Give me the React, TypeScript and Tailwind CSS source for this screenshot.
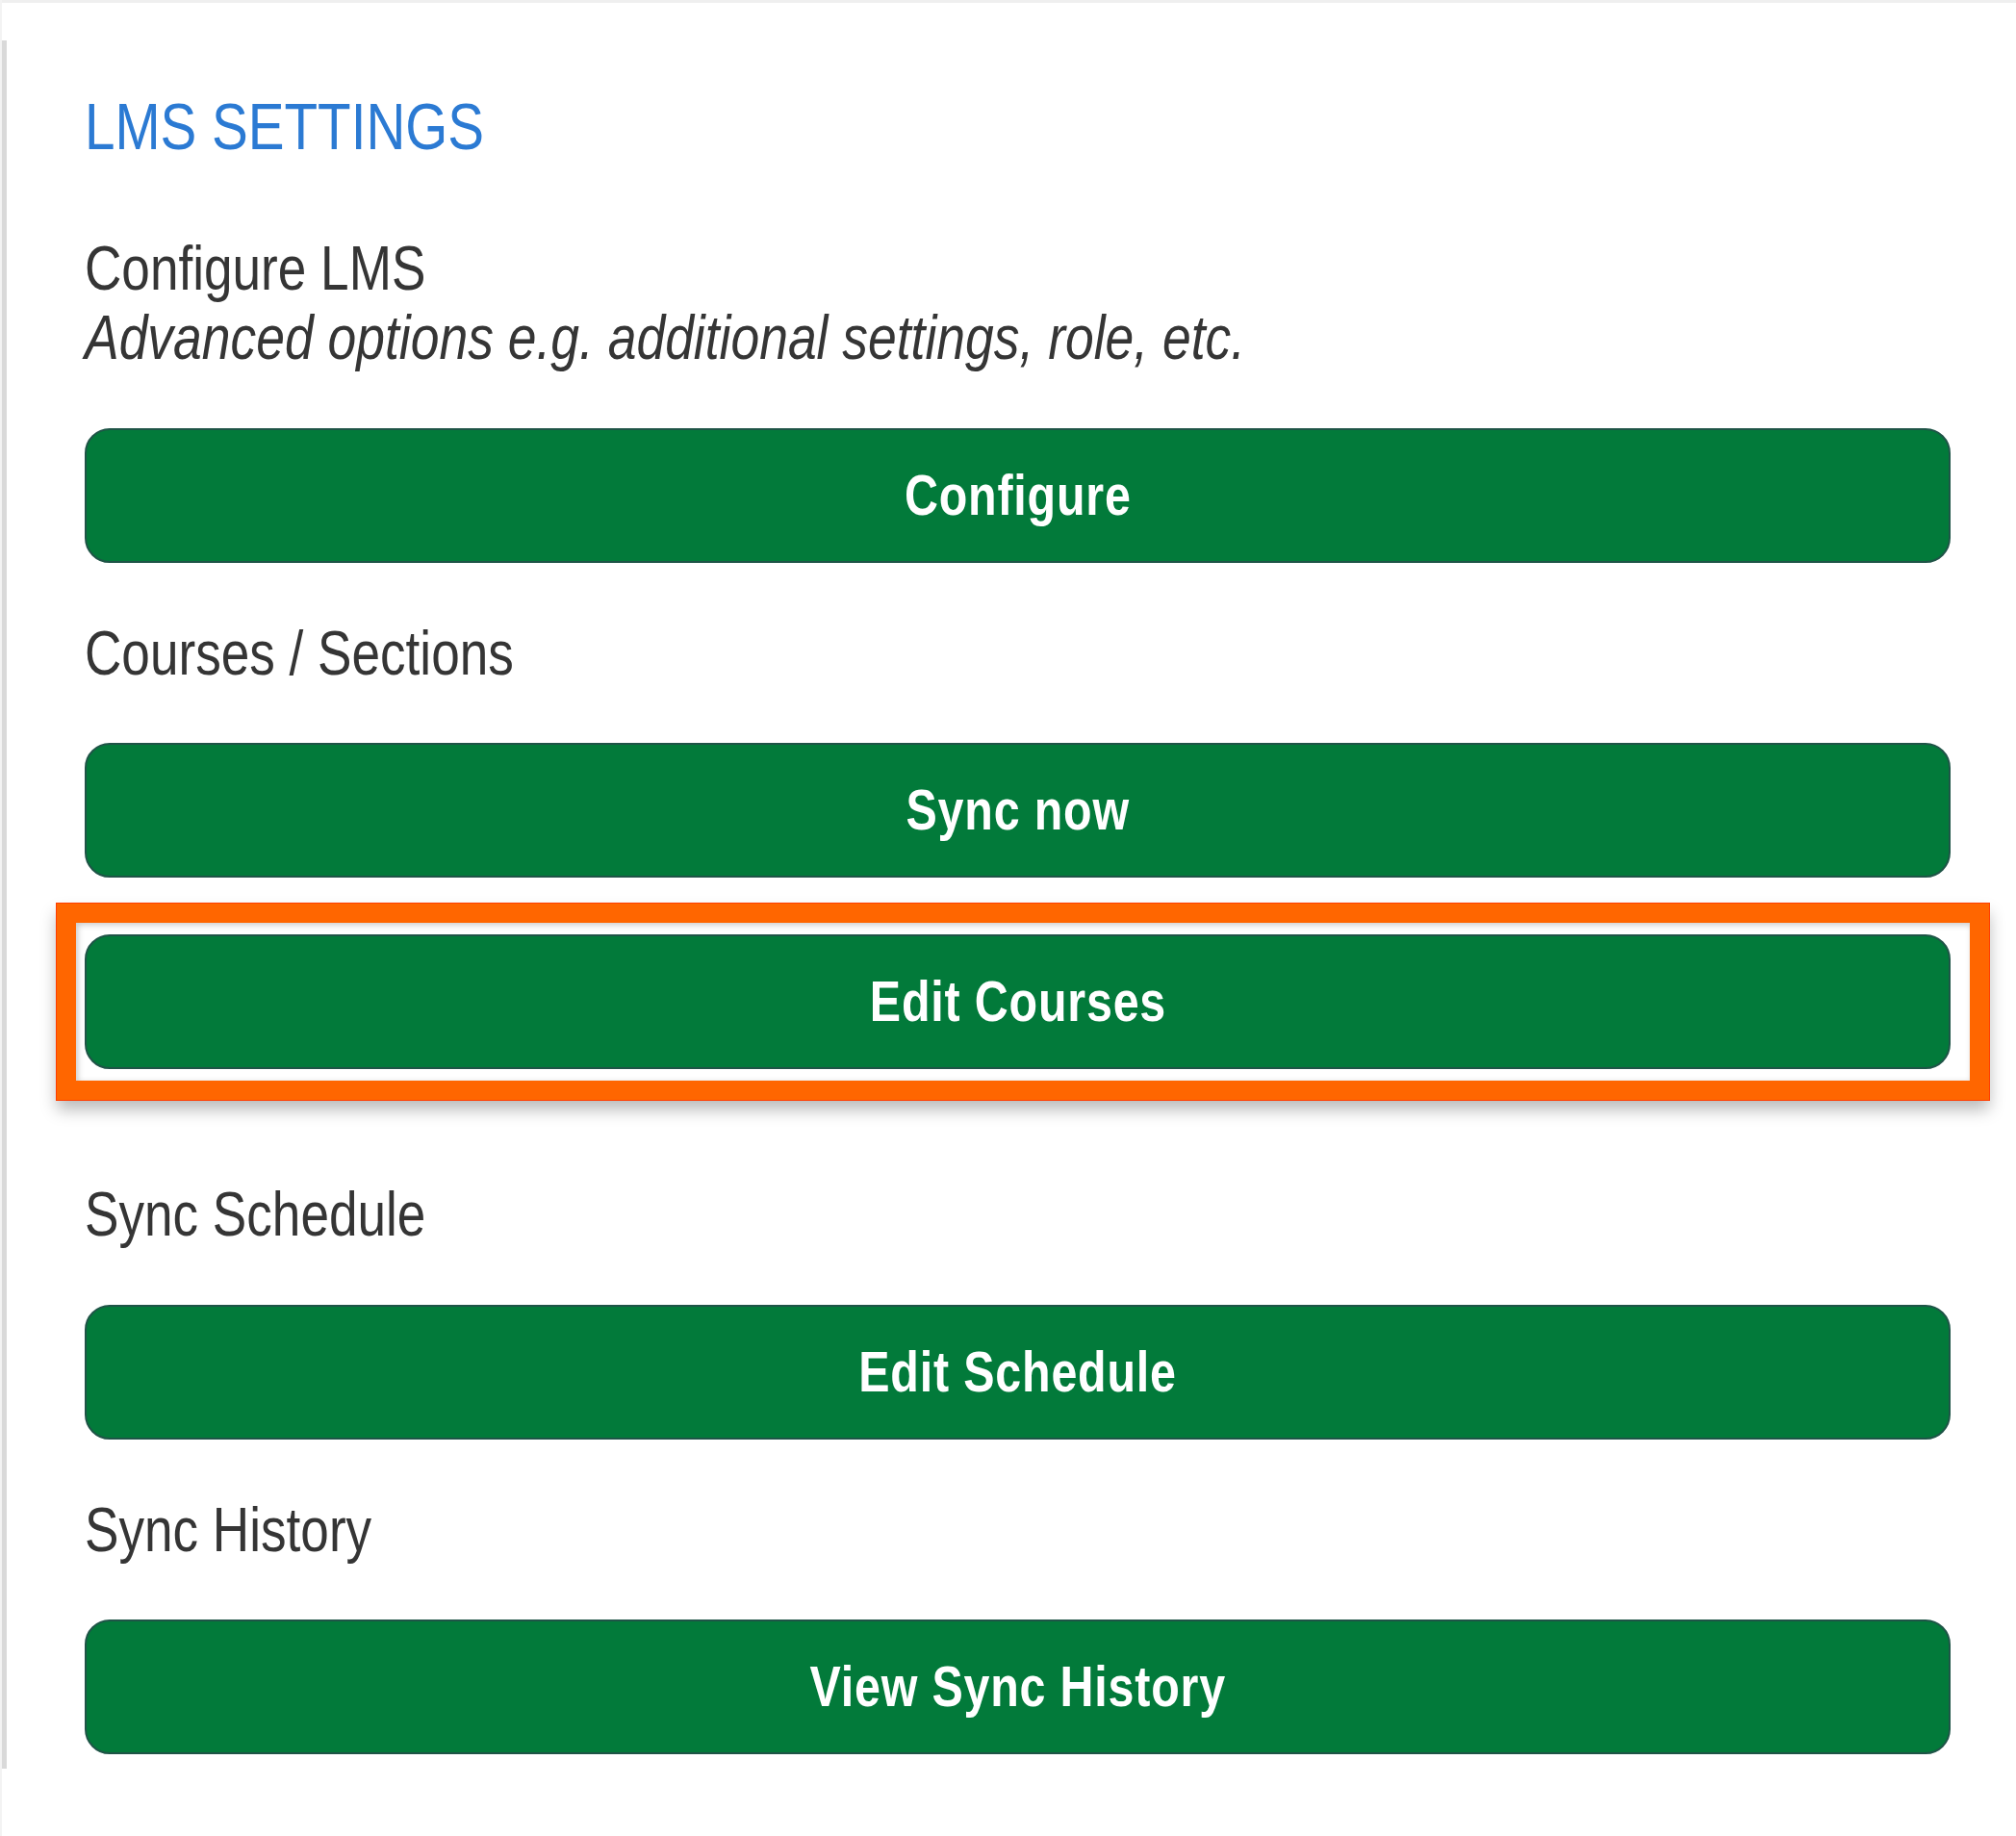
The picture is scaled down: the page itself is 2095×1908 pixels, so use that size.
import React from "react";

const FONT = { fontFamily: '"Liberation Sans", Arial, sans-serif' };

function GreenButton({ label }: { label: string }) {
  return (
    <button
      className="w-full h-[140px] rounded-[26px] bg-[#027a3a] border-2 border-[#1f5447] text-white font-bold text-[59px] leading-[70px] tracking-[1px] flex items-center justify-center"
      style={FONT}
    >
      <span className="inline-block scale-x-[0.82] origin-center whitespace-nowrap">{label}</span>
    </button>
  );
}

function Label({ children, italic }: { children: React.ReactNode; italic?: boolean }) {
  return (
    <div className={"text-[64px] leading-[72px] text-[#353535] whitespace-nowrap" + (italic ? " italic" : "")} style={FONT}>
      <span className={"inline-block origin-left " + (italic ? "scale-x-[0.835]" : "scale-x-[0.83]")}>{children}</span>
    </div>
  );
}

export default function App() {
  return (
    <div className="w-[2095px] h-[1908px] bg-white overflow-hidden border-l-2 border-[#f3f3f3]">
      <div className="h-[3px] bg-[#efefef]" />
      <div className="mt-[39px] h-[1796px] border-l-[5px] border-[#d9d9d9] pl-[81px] pr-[68px] pt-[50px] flex flex-col">
        <div className="text-[69px] leading-[80px] text-[#2b7ad3] whitespace-nowrap" style={FONT}>
          <span className="inline-block scale-x-[0.82] origin-left">LMS SETTINGS</span>
        </div>

        <div className="mt-[71px]">
          <Label>Configure LMS</Label>
          <Label italic>Advanced options e.g. additional settings, role, etc.</Label>
        </div>

        <div className="mt-[58px]">
          <GreenButton label="Configure" />
        </div>

        <div className="mt-[58px]">
          <Label>Courses / Sections</Label>
        </div>

        <div className="mt-[57px]">
          <GreenButton label="Sync now" />
        </div>

        <div className="mt-[59px] relative">
          <GreenButton label="Edit Courses" />
          <div className="absolute -top-[32px] -left-[29px] -right-[40px] -bottom-[32px] border-[20px] border-[#ff6600] shadow-[0_0_0_1px_#ff3d00,0_10px_16px_rgba(0,0,0,0.28),inset_2px_2px_6px_rgba(0,0,0,0.22)] pointer-events-none" />
        </div>

        <div className="mt-[115px]">
          <Label>Sync Schedule</Label>
        </div>

        <div className="mt-[58px]">
          <GreenButton label="Edit Schedule" />
        </div>

        <div className="mt-[58px]">
          <Label>Sync History</Label>
        </div>

        <div className="mt-[57px]">
          <GreenButton label="View Sync History" />
        </div>
      </div>
    </div>
  );
}
